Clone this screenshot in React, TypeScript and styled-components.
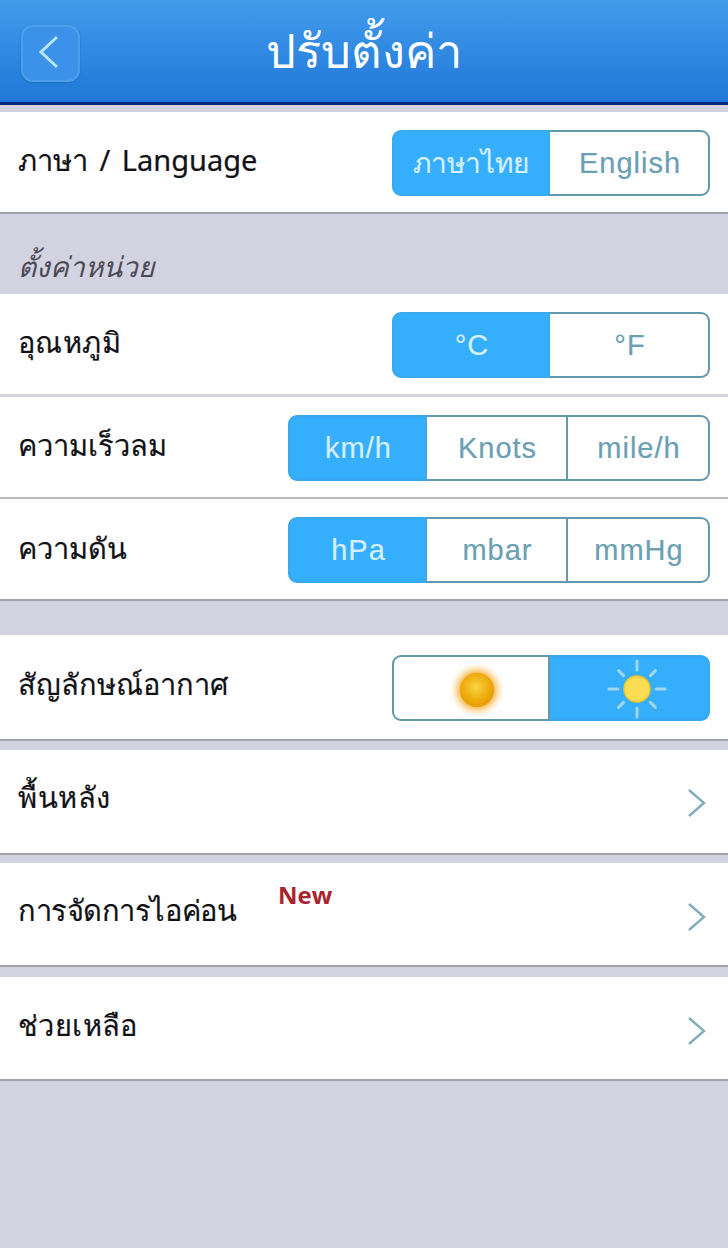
import styled, { createGlobalStyle } from 'styled-components';

const GlobalStyle = createGlobalStyle`
  html, body {
    margin: 0;
    padding: 0;
    background: #d2d2e0;
  }
  body {
    font-family: "Noto Sans", "DejaVu Sans", sans-serif;
  }
`;

const Page = styled.div`
  width: 728px;
  height: 1248px;
  overflow: hidden;
  background: #d2d2e0;
  display: flex;
  flex-direction: column;
`;

const Header = styled.header`
  height: 102px;
  flex: none;
  display: flex;
  align-items: center;
  position: relative;
  justify-content: center;
  background: linear-gradient(#439ceb, #1f77d8);
  border-bottom: 3px solid #04277a;
`;

const BackButton = styled.div`
  position: absolute;
  left: 21px;
  top: 25px;
  width: 59px;
  height: 57px;
  box-sizing: border-box;
  padding: 0 4px 3px 0;
  border-radius: 12px;
  background: #3b92e8;
  border: 2px solid #4d9fec;
  box-shadow: 0 1px 2px #1f6fc4;
  display: flex;
  align-items: center;
  justify-content: center;
`;

const Title = styled.h1`
  margin: 0;
  padding-bottom: 2px;
  color: #fff;
  font-size: 47px;
  font-weight: 500;
  line-height: 1;
`;

const Row = styled.div<{ $height: number; $gapAbove?: number; $line?: string; $lineWidth?: number }>`
  height: ${({ $height }) => $height}px;
  flex: none;
  margin-top: ${({ $gapAbove }) => $gapAbove ?? 0}px;
  box-sizing: border-box;
  padding: 2px 18px 0;
  display: flex;
  align-items: center;
  justify-content: space-between;
  background: #fefefe;
  border-bottom: ${({ $lineWidth }) => $lineWidth ?? 2}px solid ${({ $line }) => $line ?? '#a2a3aa'};
`;

const Label = styled.span<{ $lift: number; $tracking?: number; $wordGap?: number }>`
  position: relative;
  margin-bottom: ${({ $lift }) => $lift * 2}px;
  font-size: 29px;
  color: #111116;
  line-height: 1;
  letter-spacing: ${({ $tracking }) => $tracking ?? 0}px;
  word-spacing: ${({ $wordGap }) => $wordGap ?? 0}px;
  -webkit-text-stroke: 0.2px #111116;
`;

const NewBadge = styled.span`
  position: absolute;
  left: 260px;
  top: -12px;
  font-size: 24px;
  font-weight: 700;
  letter-spacing: 0;
  color: #a82530;
  font-family: "Open Sans", sans-serif;
  -webkit-text-stroke: 0;
`;

const SectionTitle = styled.div`
  height: 80px;
  flex: none;
  box-sizing: border-box;
  padding: 34px 18px 0;
  font-size: 28px;
  font-style: italic;
  line-height: 1.3;
  color: #4a4a54;
`;

const Segments = styled.div`
  height: 66px;
  display: flex;
`;

const Segment = styled.div<{ $active?: boolean; $width: number; $thai?: boolean }>`
  width: ${({ $width }) => $width}px;
  flex: none;
  display: flex;
  align-items: center;
  justify-content: center;
  box-sizing: border-box;
  padding-left: ${({ $thai }) => ($thai ? 0 : 2)}px;
  font-family: ${({ $thai }) => ($thai ? '"Noto Sans"' : '"Liberation Sans"')}, sans-serif;
  font-size: ${({ $thai }) => ($thai ? 28 : 29)}px;
  letter-spacing: ${({ $thai }) => ($thai ? 0 : 1)}px;
  color: ${({ $active }) => ($active ? '#d6effc' : '#6a9fb4')};
  background: ${({ $active }) => ($active ? '#35aefb' : '#fefefe')};
  border: 2px solid ${({ $active }) => ($active ? '#3aa9ee' : '#6499ad')};
  border-left-width: 0;
  -webkit-text-stroke: 0.2px currentColor;
  &:first-child {
    border-left-width: 2px;
    border-radius: 9px 0 0 9px;
  }
  &:last-child {
    border-radius: 0 9px 9px 0;
  }
`;

const SunSlot = styled.span<{ $shift: number; $drop: number }>`
  display: flex;
  margin-left: ${({ $shift }) => $shift * 2}px;
  margin-top: ${({ $drop }) => $drop * 2}px;
`;

const Chevron = styled.svg<{ $drop?: number }>`
  width: 22px;
  height: 32px;
  margin-right: 1px;
  margin-top: ${({ $drop }) => ($drop ?? 0) * 2}px;
`;

function OrangeSun() {
  return (
    <svg width="60" height="60" viewBox="0 0 60 60">
      <defs>
        <radialGradient id="halo">
          <stop offset="0.62" stopColor="#f8b54a" stopOpacity="0.95" />
          <stop offset="1" stopColor="#fde3b0" stopOpacity="0" />
        </radialGradient>
        <radialGradient id="ball" cx="0.47" cy="0.42" r="0.62">
          <stop offset="0" stopColor="#f8d545" />
          <stop offset="0.65" stopColor="#eeaa0a" />
          <stop offset="1" stopColor="#e29a05" />
        </radialGradient>
      </defs>
      <circle cx="30" cy="30" r="27" fill="url(#halo)" />
      <circle cx="30" cy="30" r="17" fill="url(#ball)" />
    </svg>
  );
}

function RaySun() {
  const angles = [0, 45, 90, 135, 180, 225, 270, 315];
  return (
    <svg width="60" height="60" viewBox="0 0 60 60">
      {angles.map((angle) => (
        <line
          key={angle}
          x1="30"
          y1={angle % 90 === 0 ? 2 : 4}
          x2="30"
          y2="11"
          stroke="#b9e0e2"
          strokeOpacity="0.8"
          strokeWidth="3"
          strokeLinecap="round"
          transform={`rotate(${angle} 30 30)`}
        />
      ))}
      <circle cx="30" cy="30" r="13" fill="#fbdc52" stroke="#f4c524" strokeWidth="1.5" />
    </svg>
  );
}

function ArrowRight({ drop }: { drop?: number }) {
  return (
    <Chevron viewBox="0 0 22 32" $drop={drop}>
      <path d="M2 3 L17 16 L2 29" fill="none" stroke="#82aeb9" strokeWidth="2.4" />
    </Chevron>
  );
}

export default function App() {
  return (
    <Page>
      <GlobalStyle />
      <Header>
        <BackButton>
          <svg width="22" height="34" viewBox="0 0 22 34">
            <path d="M19 2 L3 17 L19 32" fill="none" stroke="#b8e6fc" strokeWidth="3" />
          </svg>
        </BackButton>
        <Title>ปรับตั้งค่า</Title>
      </Header>

      <Row $height={102} $gapAbove={7}>
        <Label $lift={4} $wordGap={4}>ภาษา / Language</Label>
        <Segments>
          <Segment $active $thai $width={158}>ภาษาไทย</Segment>
          <Segment $width={160}>English</Segment>
        </Segments>
      </Row>

      <SectionTitle>ตั้งค่าหน่วย</SectionTitle>

      <Row $height={103} $line="#d3d3da" $lineWidth={3}>
        <Label $lift={4} $tracking={0.4}>อุณหภูมิ</Label>
        <Segments>
          <Segment $active $width={158}>°C</Segment>
          <Segment $width={160}>°F</Segment>
        </Segments>
      </Row>
      <Row $height={102} $line="#b9b9c2">
        <Label $lift={4}>ความเร็วลม</Label>
        <Segments>
          <Segment $active $width={139}>km/h</Segment>
          <Segment $width={141}>Knots</Segment>
          <Segment $width={142}>mile/h</Segment>
        </Segments>
      </Row>
      <Row $height={102}>
        <Label $lift={3}>ความดัน</Label>
        <Segments>
          <Segment $active $width={139}>hPa</Segment>
          <Segment $width={141}>mbar</Segment>
          <Segment $width={142}>mmHg</Segment>
        </Segments>
      </Row>

      <Row $height={106} $gapAbove={34}>
        <Label $lift={5}>สัญลักษณ์อากาศ</Label>
        <Segments>
          <Segment $width={158}><SunSlot $shift={5} $drop={2}><OrangeSun /></SunSlot></Segment>
          <Segment $active $width={160}><SunSlot $shift={7} $drop={1}><RaySun /></SunSlot></Segment>
        </Segments>
      </Row>

      <Row $height={105} $gapAbove={9}>
        <Label $lift={6} $tracking={0.6}>พื้นหลัง</Label>
        <ArrowRight />
      </Row>
      <Row $height={104} $gapAbove={8}>
        <Label $lift={6} $tracking={-0.45}>
          การจัดการไอค่อน
          <NewBadge>New</NewBadge>
        </Label>
        <ArrowRight drop={2} />
      </Row>
      <Row $height={104} $gapAbove={10}>
        <Label $lift={5} $tracking={0.4}>ช่วยเหลือ</Label>
        <ArrowRight drop={2} />
      </Row>
    </Page>
  );
}
